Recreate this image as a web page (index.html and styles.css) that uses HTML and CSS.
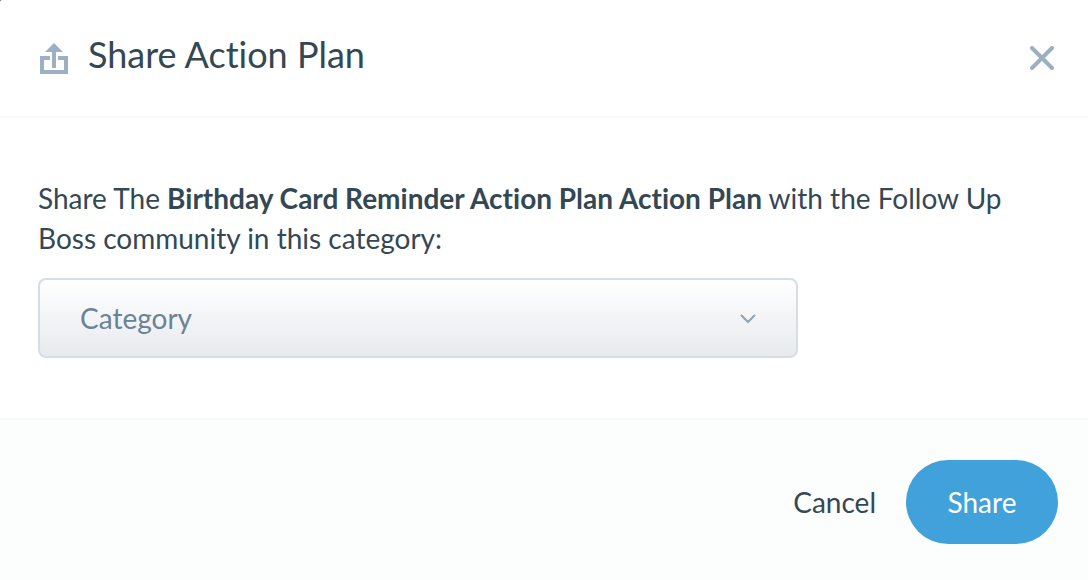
FILE: index.html
```html
<!DOCTYPE html>
<html lang="en">
<head>
  <meta charset="utf-8">
  <meta name="viewport" content="width=device-width, initial-scale=1">
  <title>Share Action Plan</title>
  <link rel="stylesheet" href="styles.css">
</head>
<body>
  <form class="dialog" role="dialog" aria-labelledby="dialog-title">
    <header class="dialog-header">
      <svg class="share-icon" viewBox="0 0 28 31" aria-hidden="true">
        <path d="M0 13h10v4H4v10h20V17h-6v-4h10v18H0z"/>
        <path d="M14 0l9 9h-7v16h-4V9H5z"/>
      </svg>
      <h1 class="dialog-title" id="dialog-title">Share Action Plan</h1>
      <button class="close-button" type="button" aria-label="Close">
        <svg class="close-icon" viewBox="0 0 24 24" aria-hidden="true">
          <path d="M2 2l20 20M22 2L2 22"/>
        </svg>
      </button>
    </header>
    <main class="dialog-body">
      <label class="prompt" for="category">Share The <strong>Birthday Card Reminder Action Plan Action Plan</strong> with the Follow Up Boss community in this category:</label>
      <div class="select-field">
        <select class="select" id="category">
          <option>Category</option>
        </select>
        <svg class="chevron" viewBox="0 0 16 10" aria-hidden="true">
          <path d="M1 1l7 7 7-7"/>
        </svg>
      </div>
    </main>
    <footer class="dialog-footer">
      <button class="cancel-button" type="button">Cancel</button>
      <button class="share-button" type="submit">Share</button>
    </footer>
  </form>
</body>
</html>
```
FILE: styles.css
```css
* {
  box-sizing: border-box;
}

body {
  margin: 0;
  background: #555;
  color: #344854;
  font-family: Lato, "Open Sans", sans-serif;
  font-size: 28px;
  font-variant-ligatures: none;
  line-height: 40px;
}

button,
select {
  margin: 0;
  border: 0;
  font: inherit;
  font-variant-ligatures: none;
  cursor: pointer;
}

.dialog {
  display: flex;
  flex-direction: column;
  min-height: 100vh;
  border-top-left-radius: 2px;
  background: #fff;
}

.dialog-header {
  display: flex;
  align-items: center;
  padding: 33px 30px 33px 40px;
  border-bottom: 2px solid #f7f8f8;
}

.share-icon {
  width: 28px;
  height: 31px;
  margin-right: 20px;
  fill: #9db0c1;
}

.dialog-title {
  flex: 1;
  margin: 0;
  padding-bottom: 8px;
  font-size: 36px;
  font-weight: 400;
  line-height: 42px;
}

.close-button {
  display: flex;
  padding: 4px;
  background: none;
}

.close-icon {
  width: 24px;
  height: 24px;
  fill: none;
  stroke: #9db0c1;
  stroke-width: 4;
  stroke-linecap: round;
}

.dialog-body {
  flex: 1;
  padding: 60px 38px;
}

.prompt {
  display: block;
  margin-bottom: 20px;
}

.prompt strong {
  font-weight: 700;
}

.select-field {
  position: relative;
  max-width: 760px;
}

.select {
  appearance: none;
  width: 100%;
  height: 80px;
  padding: 0 80px 0 40px;
  border: 2px solid #d6dee2;
  border-radius: 8px;
  background: linear-gradient(#fff, #e7eaee);
  color: #6b8394;
}

.chevron {
  position: absolute;
  top: 36px;
  right: 42px;
  width: 16px;
  height: 10px;
  fill: none;
  stroke: #8fa3b2;
  stroke-width: 2;
  pointer-events: none;
}

.dialog-footer {
  display: flex;
  justify-content: flex-end;
  align-items: center;
  gap: 30px;
  padding: 40px 30px 36px;
  border-top: 2px solid #f7f9f9;
  background: #fcfdfd;
}

.cancel-button {
  padding: 0;
  background: none;
  color: #344854;
}

.share-button {
  min-width: 152px;
  padding: 22px 40px;
  border-radius: 42px;
  background: #41a1da;
  color: #fff;
}
```
